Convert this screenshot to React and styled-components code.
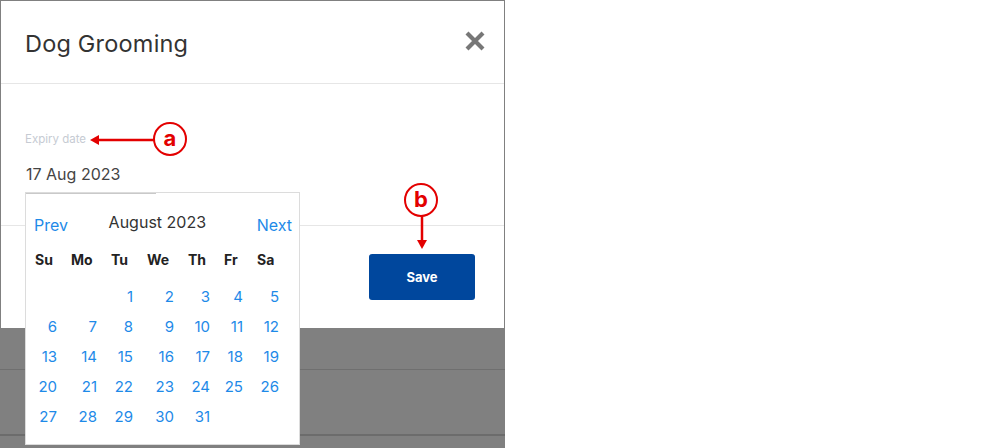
import styled, { createGlobalStyle } from 'styled-components';

const GlobalStyle = createGlobalStyle`
  body {
    margin: 0;
    font-family: Inter, "Liberation Sans", sans-serif;
    background: #fff;
  }
`

const Page = styled.div`
  display: flex;
  height: 448px;
`

// dimmed page behind the modal, with two faint table rows
const Backdrop = styled.div`
  width: 505px;
  height: 448px;
  background-color: #808080;
  background-image:
    linear-gradient(#6f6f6f, #6f6f6f),
    linear-gradient(#6c6c6c, #6c6c6c);
  background-size: 100% 1px, 100% 2px;
  background-position: 0 369px, 0 434px;
  background-repeat: no-repeat;
  padding: 1px 0 0 1px;
  box-sizing: border-box;
`

const Modal = styled.div`
  position: relative;
  width: 503px;
  height: 327px;
  background: #fff;
  display: flex;
  flex-direction: column;
`

const Header = styled.div`
  height: 83px;
  display: flex;
  align-items: center;
  justify-content: space-between;
  padding: 3px 18px 0 25px;
  border-bottom: 1px solid #e6e6e6;
  box-sizing: border-box;
`

const Title = styled.h2`
  margin: 0 0 0 -1px;
  font-size: 23.5px;
  font-weight: 400;
  color: #333;
  letter-spacing: 0.2px;
`

const CloseButton = styled.button`
  border: none;
  background: none;
  padding: 0;
  width: 22px;
  height: 22px;
  margin-top: -6px;
  cursor: pointer;
`

const Body = styled.div`
  height: 142px;
  padding: 48px 25px 0;
  box-sizing: border-box;
  border-bottom: 1px solid #e6e6e6;
`

const Label = styled.div`
  font-size: 11.5px;
  color: #c6cbd3;
  height: 14px;
  margin-left: -1px;
`

const DateInput = styled.div`
  position: relative;
  z-index: 3;
  width: 130px;
  margin-top: 18px;
  padding-bottom: 9px;
  font-size: 16px;
  color: #444;
  border-bottom: 1px solid #c9c9c9;
`

const Footer = styled.div`
  flex: 1;
  display: flex;
  justify-content: flex-end;
  align-items: flex-start;
  padding: 28px 29px 0 0;
`

const SaveButton = styled.button`
  width: 106px;
  height: 46px;
  border: none;
  border-radius: 3px;
  background: #00479d;
  color: #fff;
  font-family: inherit;
  font-size: 13px;
  font-weight: 700;
  cursor: pointer;
`

const Calendar = styled.div`
  position: absolute;
  left: 24px;
  top: 191px;
  z-index: 2;
  width: 275px;
  height: 253px;
  box-sizing: border-box;
  background: #fff;
  border: 1px solid #dcdcdc;
  padding: 20px 7px 0 8px;
`

const NavRow = styled.div`
  display: flex;
  justify-content: space-between;
  align-items: center;
  height: 22px;
`

const NavLink = styled.span`
  font-size: 16px;
  color: #1e8ae8;
  margin-top: 2px;
  cursor: pointer;
`

const Month = styled.span`
  font-size: 16px;
  color: #333;
  margin-top: -4px;
  margin-right: 10px;
`

const Grid = styled.div`
  display: grid;
  grid-template-columns: 22px 26px 22px 27px 22px 19px 22px;
  column-gap: 14px;
  margin-top: 15px;
  padding-left: 1px;
`

const DayName = styled.div`
  font-size: 14px;
  font-weight: 700;
  color: #222;
  height: 20px;
  line-height: 20px;
  white-space: nowrap;
  margin-bottom: 17px;
`

const Day = styled.div`
  font-size: 15px;
  color: #1e8ae8;
  text-align: right;
  height: 30px;
  line-height: 20px;
  cursor: pointer;
`

const Callout = styled.div`
  position: absolute;
  left: ${p => p.x}px;
  top: ${p => p.y}px;
  width: 34px;
  height: 34px;
  border: 2px solid #e30000;
  border-radius: 50%;
  background: #fff;
  color: #e30000;
  font-size: 22px;
  font-weight: 700;
  display: flex;
  align-items: center;
  justify-content: center;
  line-height: 1;
  padding-bottom: 3px;
  box-sizing: border-box;
  z-index: 5;
`

const Arrow = styled.svg`
  position: absolute;
  left: ${p => p.x}px;
  top: ${p => p.y}px;
  z-index: 5;
`

const Blank = styled.div``

const days = ['Su', 'Mo', 'Tu', 'We', 'Th', 'Fr', 'Sa']

const App = () => {
  // August 2023 starts on a Tuesday
  const cells = [null, null]
  for (let d = 1; d <= 31; d++) cells.push(d)

  return (
    <>
      <GlobalStyle />
      <Page>
        <Backdrop>
          <Modal>
            <Header>
              <Title>Dog Grooming</Title>
              <CloseButton aria-label="close">
                <svg width="22" height="22" viewBox="0 0 22 22">
                  <path d="M3 3 L19 19 M19 3 L3 19" stroke="#777" strokeWidth="4.2" />
                </svg>
              </CloseButton>
            </Header>
            <Body>
              <Label>Expiry date</Label>
              <DateInput>17 Aug 2023</DateInput>
            </Body>
            <Footer>
              <SaveButton>Save</SaveButton>
            </Footer>

            <Calendar>
              <NavRow>
                <NavLink>Prev</NavLink>
                <Month>August 2023</Month>
                <NavLink>Next</NavLink>
              </NavRow>
              <Grid>
                {days.map(d => <DayName key={d}>{d}</DayName>)}
                {cells.map((c, i) => c ? <Day key={i}>{c}</Day> : <Blank key={i} />)}
              </Grid>
            </Calendar>

            <Arrow x={88} y={132} width={66} height={16} viewBox="0 0 66 16">
              <path d="M8 7 L65 7" stroke="#e30000" strokeWidth="2.5" />
              <path d="M1 7 L10 2 L10 12 Z" fill="#e30000" />
            </Arrow>
            <Callout x={152} y={121}>a</Callout>

            <Callout x={403} y={182}>b</Callout>
            <Arrow x={413} y={215} width={16} height={34} viewBox="0 0 16 34">
              <path d="M8 0 L8 26" stroke="#e30000" strokeWidth="2.5" />
              <path d="M8 33 L3 24 L13 24 Z" fill="#e30000" />
            </Arrow>
          </Modal>
        </Backdrop>
      </Page>
    </>
  );
}

export default App;
